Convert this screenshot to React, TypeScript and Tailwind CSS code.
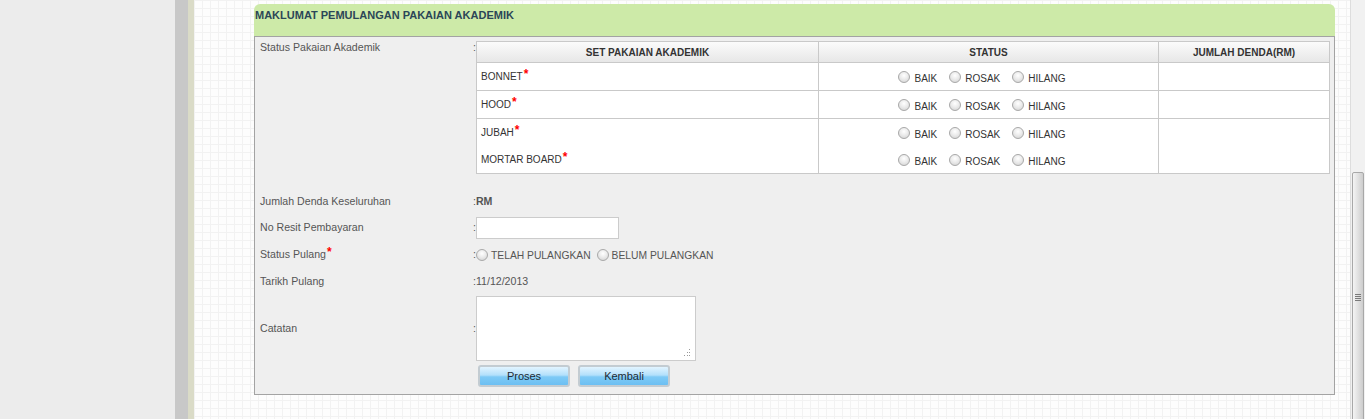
import React from 'react';

const items = ['BONNET', 'HOOD', 'JUBAH', 'MORTAR BOARD'];
const statuses = ['BAIK', 'ROSAK', 'HILANG'];

function Radio() {
  return (
    <span className="inline-block w-[12px] h-[12px] rounded-full border border-[#a9a9a9] bg-[radial-gradient(circle_at_50%_35%,#ffffff_0%,#ececec_45%,#cfcfcf_100%)] shrink-0" />
  );
}

function Req() {
  return <span className="relative -top-[2px] ml-[1px] text-[12px] font-bold leading-none text-[#ff0000]">*</span>;
}

function StatusOptions() {
  return (
    <div className="flex items-center justify-center pr-[13px] pt-[1px]">
      {statuses.map(s => (
        <label key={s} className="flex items-center mx-[6px]">
          <Radio />
          <span className="ml-[4px] mt-[2px]">{s}</span>
        </label>
      ))}
    </div>
  );
}

export default function App() {
  return (
    <div className="flex h-[419px] w-[1365px] overflow-hidden font-['Liberation_Sans',Arial,sans-serif]">
      {/* sisi kiri */}
      <div className="w-[175px] bg-[#ececec]" />
      <div className="w-[13px] bg-[#c8c8c8]" />
      <div className="w-[6px] bg-[#dadbc7]" />

      {/* kandungan */}
      <div className="flex-1 pl-[60px] pt-[4px] bg-[#fdfdfd] [background-image:linear-gradient(#f2f2f2_1px,transparent_1px),linear-gradient(90deg,#f2f2f2_1px,transparent_1px)] [background-size:8px_8px]">
        <div className="w-[1081px]">
          <div className="h-[32px] rounded-t-[6px] bg-[#cdeaa8] pl-[1px] pt-[5px] text-[11px] font-bold leading-[13px] text-[#2b4657]">
            MAKLUMAT PEMULANGAN PAKAIAN AKADEMIK
          </div>

          <div className="h-[359px] border border-[#a3a3a3] bg-[#efefef] pl-[5px] pt-[4px] text-[10.6px] text-[#555555]">
            {/* Status pakaian */}
            <div className="flex items-start">
              <div className="w-[213px] leading-[12px]">Status Pakaian Akademik</div>
              <div className="w-[3px] leading-[12px]">:</div>
              <table className="w-[853px] table-fixed border-collapse border border-[#c9c9c9] bg-white text-[10px] text-[#333333]">
                <thead>
                  <tr className="h-[21px] bg-[linear-gradient(#fbfbfb,#e6e6e6)]">
                    <th className="w-[342px] border border-[#c9c9c9] font-bold">SET PAKAIAN AKADEMIK</th>
                    <th className="w-[340px] border border-[#c9c9c9] font-bold">STATUS</th>
                    <th className="w-[171px] border border-[#c9c9c9] font-bold">JUMLAH DENDA(RM)</th>
                  </tr>
                </thead>
                <tbody>
                  {items.map((it, i) => (
                    <tr key={it} className={i === 3 ? 'h-[27px]' : 'h-[28px]'}>
                      <td
                        className={`border-x border-[#c9c9c9] pl-[4px] ${i < 2 ? 'border-b' : ''}`}
                      >
                        {it}
                        <Req />
                      </td>
                      <td className={`border-x border-[#c9c9c9] ${i < 2 ? 'border-b' : ''}`}>
                        <StatusOptions />
                      </td>
                      {i < 2 && <td className="border border-[#c9c9c9]" />}
                      {i === 2 && <td rowSpan={2} className="border border-[#c9c9c9]" />}
                    </tr>
                  ))}
                </tbody>
              </table>
            </div>

            {/* Medan borang */}
            <div className="mt-[15px] flex h-[26px] items-center">
              <div className="w-[213px]">Jumlah Denda Keseluruhan</div>
              <div>:</div>
              <div className="font-bold">RM</div>
            </div>
            <div className="flex h-[26px] items-center">
              <div className="w-[213px]">No Resit Pembayaran</div>
              <div className="w-[3px]">:</div>
              <input className="h-[22px] w-[143px] border border-[#cccccc] bg-white outline-none" />
            </div>
            <div className="flex h-[28px] items-center">
              <div className="w-[213px]">
                Status Pulang
                <Req />
              </div>
              <div className="w-[3px]">:</div>
              <label className="flex items-center text-[10.3px]">
                <Radio />
                <span className="ml-[3px] mt-[1px]">TELAH PULANGKAN</span>
              </label>
              <label className="ml-[6px] flex items-center text-[10.3px]">
                <Radio />
                <span className="ml-[3px] mt-[1px]">BELUM PULANGKAN</span>
              </label>
            </div>
            <div className="flex h-[26px] items-center">
              <div className="w-[213px]">Tarikh Pulang</div>
              <div>:</div>
              <div>11/12/2013</div>
            </div>
            <div className="mt-[1px] flex items-center">
              <div className="w-[213px]">Catatan</div>
              <div className="w-[3px]">:</div>
              <div className="relative">
                <textarea className="block h-[65px] w-[220px] resize-none border border-[#cccccc] bg-white outline-none" />
                <svg className="absolute bottom-[4px] right-[5px]" width="8" height="8" viewBox="0 0 8 8">
                  <g fill="#9a9a9a">
                    <rect x="6" y="0" width="1" height="1" />
                    <rect x="4" y="3" width="1" height="1" />
                    <rect x="6" y="3" width="1" height="1" />
                    <rect x="1" y="6" width="1" height="1" />
                    <rect x="4" y="6" width="1" height="1" />
                    <rect x="6" y="6" width="1" height="1" />
                  </g>
                </svg>
              </div>
            </div>
            <div className="ml-[218px] mt-[4px] flex gap-[8px]">
              {['Proses', 'Kembali'].map(b => (
                <button
                  key={b}
                  className="h-[22px] w-[92px] rounded-[3px] border-2 border-[#c3ccd2] bg-[linear-gradient(#e2f4ff_0%,#b3e0fb_45%,#7ecaf6_55%,#6cbff2_100%)] text-[11px] leading-[18px] text-[#1d2a33]"
                >
                  {b}
                </button>
              ))}
            </div>
          </div>
        </div>
      </div>

      {/* bar skrol */}
      <div className="w-[15px] border-l border-[#dddddd] bg-[#f1f1f1]">
        <div className="mt-[172px] ml-[1px] flex h-[260px] w-[12px] flex-col items-center gap-[1px] rounded-t-[2px] border border-[#a8a8a8] bg-[linear-gradient(90deg,#f4f4f4,#cdcdcd)] pt-[121px]">
          <span className="h-[1px] w-[6px] bg-[#7a7a7a]" />
          <span className="h-[1px] w-[6px] bg-[#7a7a7a]" />
          <span className="h-[1px] w-[6px] bg-[#7a7a7a]" />
          <span className="h-[1px] w-[6px] bg-[#7a7a7a]" />
        </div>
      </div>
    </div>
  );
}
